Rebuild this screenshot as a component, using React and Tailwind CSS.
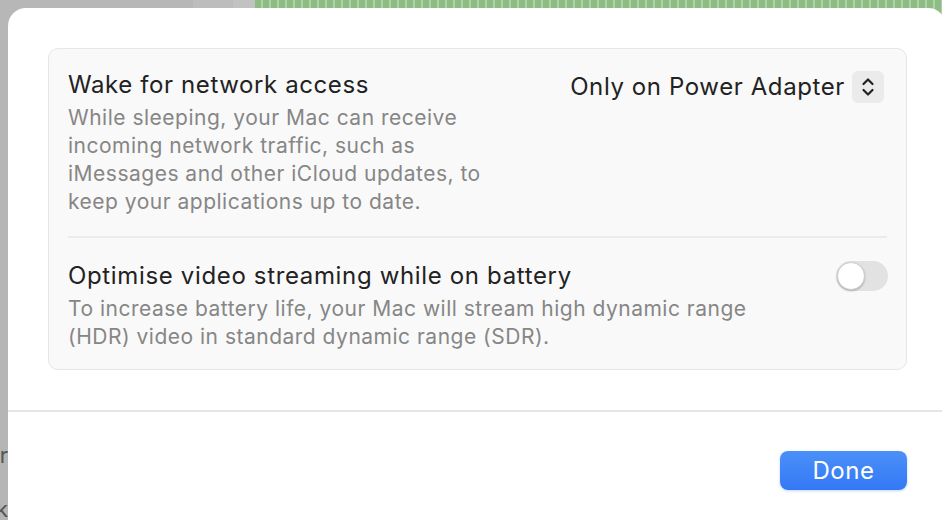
export default function App() {
  return (
    <div
      className="relative h-[520px] w-[942px] overflow-hidden bg-[#b5b5b5]"
      style={{ fontFamily: 'Inter, "Noto Sans", sans-serif' }}
    >
      {/* desktop behind the sheet */}
      <div className="absolute inset-0 flex flex-col">
        <div className="flex h-[40px]">
          <div className="w-[193px] bg-[#b7b7b7]" />
          <div className="w-[40px] bg-[#bdbdbd]" />
          <div className="w-[22px] bg-[#c2c2c2]" />
          <div className="flex-1 bg-[repeating-linear-gradient(90deg,#8dbd83_0px,#8dbd83_6px,#b3cfad_6px,#b3cfad_8px)]" />
        </div>
        <div className="flex flex-1 flex-col items-end overflow-hidden pr-[934px] text-[22px] text-[#555]">
          <span className="mt-[401px] leading-[28px]">r</span>
          <span className="mt-[26px] leading-[28px]">k</span>
        </div>
      </div>

      {/* sheet */}
      <div className="relative ml-[8px] mt-[8px] flex h-[520px] w-[938px] flex-col rounded-t-[18px] bg-white">
        <div className="pl-[40px] pr-[39px] pt-[40px]">
          <div className="rounded-[10px] border border-[#e6e6e6] bg-[#f9f9f9] px-[19px] pb-[18px] pt-[22px]">
            {/* row 1 */}
            <div className="flex items-start justify-between">
              <div>
                <div className="text-[24px] leading-[28px] tracking-[0.6px] text-[#222]">
                  Wake for network access
                </div>
                <div className="mt-[5px] text-[21px] leading-[28px] tracking-[0.5px] text-[#868686]">
                  While sleeping, your Mac can receive
                  <br />
                  incoming network traffic, such as
                  <br />
                  iMessages and other iCloud updates, to
                  <br />
                  keep your applications up to date.
                </div>
              </div>
              <div className="mr-[3px] flex items-center gap-[7px]">
                <span className="text-[24px] leading-[28px] tracking-[0.6px] text-[#222]">
                  Only on Power Adapter
                </span>
                <div className="flex h-[32px] w-[32px] items-center justify-center rounded-[6px] bg-[#ebebeb]">
                  <svg width="14" height="22" viewBox="0 0 14 22" fill="none">
                    <path
                      d="M2.5 8L7 3.5L11.5 8M2.5 14L7 18.5L11.5 14"
                      stroke="#222"
                      strokeWidth="2.2"
                      strokeLinecap="round"
                      strokeLinejoin="round"
                    />
                  </svg>
                </div>
              </div>
            </div>

            <div className="mb-[24px] mt-[20px] h-[2px] bg-[#ebebeb]" />

            {/* row 2 */}
            <div className="flex items-start justify-between">
              <div>
                <div className="text-[24px] leading-[28px] tracking-[0.65px] text-[#222]">
                  Optimise video streaming while on battery
                </div>
                <div className="mt-[5px] text-[21px] leading-[28px] tracking-[0.5px] text-[#868686]">
                  To increase battery life, your Mac will stream high dynamic range
                  <br />
                  (HDR) video in standard dynamic range (SDR).
                </div>
              </div>
              <div className="mr-[-1px] mt-[-1px] flex h-[30px] w-[52px] items-center rounded-full bg-[#e2e2e2] px-[1px]">
                <div className="h-[28px] w-[28px] rounded-full border border-[#d0d0d0] bg-white shadow-[0_1px_2px_rgba(0,0,0,0.25)]" />
              </div>
            </div>
          </div>
        </div>

        <div className="mt-[40px] h-[2px] bg-[#e6e6e6]" />

        <div className="flex justify-end pr-[39px] pt-[39px]">
          <button
            type="button"
            className="flex h-[39px] w-[127px] items-center justify-center rounded-[8px] bg-[linear-gradient(180deg,#4b90f8,#3478f6)] text-[24px] tracking-[0.5px] text-white shadow-[0_1px_3px_rgba(52,120,246,0.3)]"
          >
            Done
          </button>
        </div>
      </div>
    </div>
  );
}
